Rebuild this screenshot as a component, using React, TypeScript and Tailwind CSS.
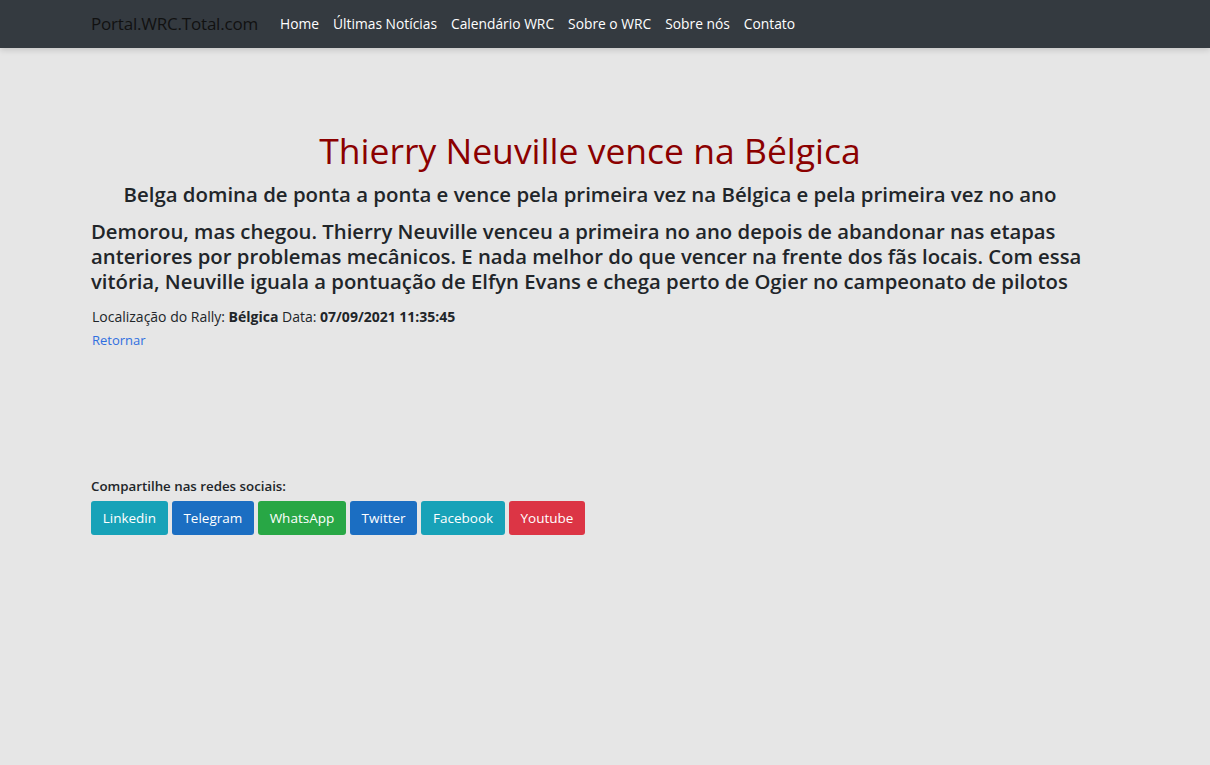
export default function App() {
  const buttons = [
    { label: 'Linkedin', cls: 'bg-[#17a2b8]' },
    { label: 'Telegram', cls: 'bg-[#1b6ec2]' },
    { label: 'WhatsApp', cls: 'bg-[#28a745]' },
    { label: 'Twitter', cls: 'bg-[#1b6ec2]' },
    { label: 'Facebook', cls: 'bg-[#17a2b8]' },
    { label: 'Youtube', cls: 'bg-[#dc3545]' },
  ];

  return (
    <div className="min-h-screen bg-[#e6e6e6] font-['Open_Sans',sans-serif] text-[#212529]">
      {/* Navbar */}
      <nav className="h-12 bg-[#343a40] shadow-[0_2px_6px_rgba(0,0,0,0.15)] flex items-center">
        <div className="ml-[91px] flex items-center">
          <span className="text-[17px] text-[#111] tracking-[-0.2px]">Portal.WRC.Total.com</span>
          <ul className="ml-[22px] flex gap-[14px] text-[13.8px] text-white">
            <li>Home</li>
            <li>Últimas Notícias</li>
            <li>Calendário WRC</li>
            <li>Sobre o WRC</li>
            <li>Sobre nós</li>
            <li>Contato</li>
          </ul>
        </div>
      </nav>

      <main className="ml-[91px] w-[998px] pt-[78px]">
        <h1 className="text-center text-[35.5px] leading-[48px] text-[#8b0000]">
          Thierry Neuville vence na Bélgica
        </h1>
        <h2 className="mt-[7px] text-center text-[20.4px] leading-[26px] font-semibold">
          Belga domina de ponta a ponta e vence pela primeira vez na Bélgica e pela primeira vez no ano
        </h2>
        <p className="mt-[12px] text-[20.3px] leading-[25px] font-semibold pr-[6px]">
          Demorou, mas chegou. Thierry Neuville venceu a primeira no ano depois de abandonar nas etapas
          anteriores por problemas mecânicos. E nada melhor do que vencer na frente dos fãs locais. Com essa
          vitória, Neuville iguala a pontuação de Elfyn Evans e chega perto de Ogier no campeonato de pilotos
        </p>
        <p className="mt-[13px] text-[14px] leading-[20px] ml-[1px]">
          Localização do Rally: <b>Bélgica</b> Data: <b>07/09/2021 11:35:45</b>
        </p>
        <a className="block ml-[1px] mt-[3px] text-[13px] leading-[20px] text-[#2f6fe0]">Retornar</a>

        <div className="mt-[126px]">
          <p className="text-[13.3px] font-semibold leading-[20px]">Compartilhe nas redes sociais:</p>
          <div className="mt-[5px] flex gap-[4px]">
            {buttons.map((b) => (
              <button
                key={b.label}
                className={`${b.cls} h-[34px] px-[11.7px] rounded-[3px] text-white text-[13.5px]`}
              >
                {b.label}
              </button>
            ))}
          </div>
        </div>
      </main>
    </div>
  );
}
